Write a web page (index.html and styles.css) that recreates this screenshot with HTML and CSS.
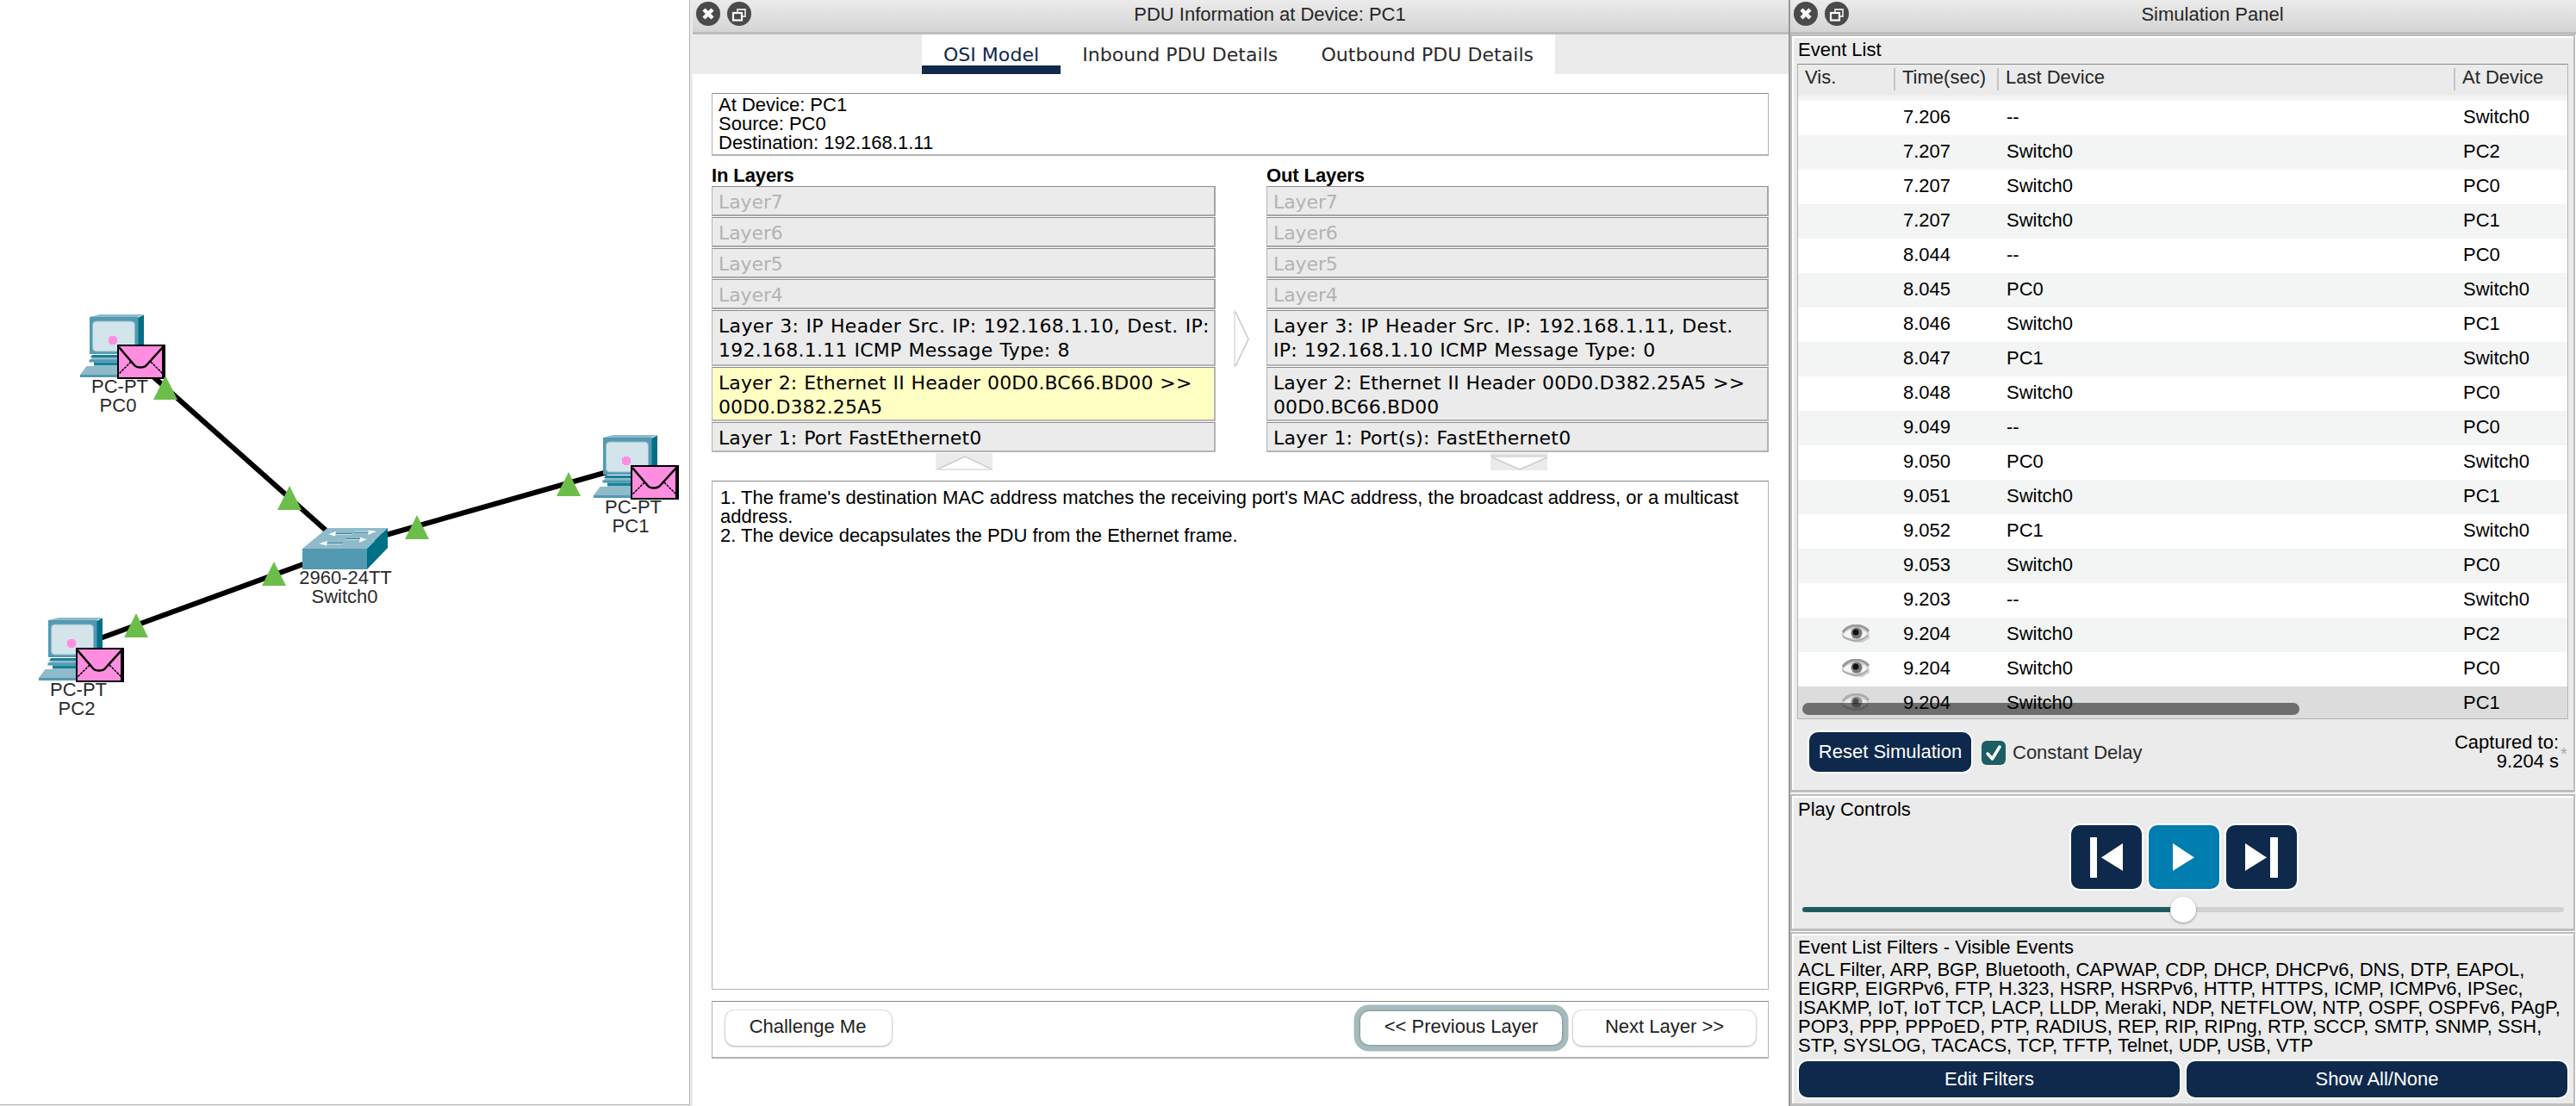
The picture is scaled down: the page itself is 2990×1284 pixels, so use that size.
FILE: index.html
```html
<!DOCTYPE html>
<html lang="en">
<head>
<meta charset="utf-8">
<title>Packet Tracer - Simulation</title>
<link rel="stylesheet" href="styles.css">
</head>
<body>
<svg class="defs" width="0" height="0" aria-hidden="true">
  <defs>
    <g id="pc">
      <path d="M104 368 116 365H167L160 368Z" fill="#8fbaca"/>
      <path d="M160 369 167 365.500V403L160 411Z" fill="#006f88"/>
      <rect x="104" y="368" width="56.500" height="43" fill="#5399b1"/>
      <rect x="107.500" y="373" width="49" height="35" rx="4" fill="#d3e4eb" stroke="#8fbaca"/>
      <path d="M107 412H162V415H105Z" fill="#17809a"/>
      <path d="M107 415H164V418H104Z" fill="#8fbaca"/>
      <rect x="103.500" y="417.500" width="60" height="3" fill="#5399b1"/>
      <rect x="109" y="420.500" width="50" height="4" fill="#17809a"/>
      <path d="M100.500 425H168V435H93Z" fill="#8fbaca"/>
      <rect x="93" y="435" width="76" height="3" fill="#5399b1"/>
      <path d="M128 390h6v1.500h2v7h-2v1.500h-6v-1.500h-2v-7h2Z" fill="#ff8ee0"/>
      <rect x="137" y="401" width="54" height="38" fill="#ff8ee0" stroke="#000" stroke-width="2"/>
      <path d="M190 400V440" stroke="#000" stroke-width="4"/>
      <path d="M138 403 156 424Q158 426.500 163 426.500T170 424L189 403" fill="none" stroke="#000" stroke-width="2.600"/>
      <path d="M152 420 138 434M175 420 189 434" stroke="#000" stroke-width="1.500" stroke-dasharray="3 1"/>
    </g>
    <path id="link" d="M0 0 14 28H-14Z" fill="#6cbe4b"/>
    <g id="close">
      <circle cx="14" cy="14" r="14" fill="#4a4a4a"/>
      <path d="M9 9 19 19M19 9 9 19" stroke="#fff" stroke-width="4.500"/>
    </g>
    <g id="float">
      <circle cx="14" cy="14" r="14" fill="#4a4a4a"/>
      <path d="M12 12V9H21V17H18" fill="none" stroke="#ddd" stroke-width="1.800"/>
      <rect x="7" y="13" width="10" height="8.500" fill="none" stroke="#fff" stroke-width="2.200"/>
    </g>
    <g id="eye">
      <path d="M0 8Q4 1 15 0Q27 0 31 8L32 16Q28 18 24 21Q12 22 0 14Z" fill="#cfcfcf"/>
      <path d="M1 9Q6 2 15 1Q26 1 31 8" fill="none" stroke="#9a9a9a" stroke-width="3"/>
      <path d="M2 11Q6 6 12 6V16Q6 16 2 13ZM22 7Q27 7 29 10 28 15 22 16Z" fill="#f5f5f5"/>
      <circle cx="17" cy="10" r="6.500" fill="#777"/>
      <circle cx="16" cy="9" r="3.500" fill="#111"/>
      <path d="M1 14Q14 22 24 17L30 13" fill="none" stroke="#aaa" stroke-width="2"/>
    </g>
  </defs>
</svg>

<div class="app">
  <main class="workspace">
    <svg class="topology" width="800" height="1282" viewBox="0 0 800 1282">
      <path d="M150 412.500 400 635M100 747 400 637.500M420 629 740 538" stroke="#000" stroke-width="6" fill="none"/>
      <use href="#pc"/>
      <use href="#pc" x="-48" y="352"/>
      <use href="#pc" x="596" y="140"/>
      <path d="M351 637 380 613H450L426 637Z" fill="#8fbaca"/>
      <path d="M426 637 450 613V636L426 661Z" fill="#006f88"/>
      <rect x="351" y="637" width="75" height="24" fill="#5399b1"/>
      <path d="M382 619.500H408M372 630.500H398M411 618H434M401 625.500H424" stroke="#2b7f99" stroke-width="1"/>
      <path d="M383 620.500H408M373 631.500H398M411 617H434M401 626.500H424" stroke="#e4f0f4" stroke-width=".8"/>
      <path d="M381 620 390 617 389 622.500ZM370 631 380 628 379 633.500ZM437 617 428 615.500 427 621ZM426 626 418 624 417 630Z" fill="#fff"/>
      <use href="#link" x="192" y="436"/>
      <use href="#link" x="336" y="564"/>
      <use href="#link" x="318" y="652"/>
      <use href="#link" x="158" y="712"/>
      <use href="#link" x="484" y="598"/>
      <use href="#link" x="660" y="548"/>
      <g class="device-label">
        <text x="139" y="455.500">PC-PT</text><text x="137" y="477.500">PC0</text>
        <text x="91" y="807.500">PC-PT</text><text x="89" y="829.500">PC2</text>
        <text x="735" y="595.500">PC-PT</text><text x="732" y="617.500">PC1</text>
        <text x="401" y="677.500">2960-24TT</text><text x="400" y="699.500">Switch0</text>
      </g>
    </svg>
  </main>

  <section class="dock pdu">
    <header class="titlebar">
      <svg width="64" height="28"><use href="#close"/><use href="#float" x="36"/></svg>
      <h1>PDU Information at Device: PC1</h1>
    </header>
    <nav class="tabs">
      <div class="tab active">OSI Model</div>
      <div class="tab">Inbound PDU Details</div>
      <div class="tab">Outbound PDU Details</div>
    </nav>
    <div class="pdu-body">
      <div class="frame info">At Device: PC1<br>Source: PC0<br>Destination: 192.168.1.11</div>
      <div class="layers">
        <div class="stack in">
          <h2>In Layers</h2>
          <div class="layer off">Layer7</div>
          <div class="layer off">Layer6</div>
          <div class="layer off">Layer5</div>
          <div class="layer off">Layer4</div>
          <div class="layer tall"><span class="wider">Layer 3: IP Header Src. IP: 192.168.1.10, Dest. IP:</span><br><span class="wide">192.168.1.11 ICMP Message Type: 8</span></div>
          <div class="layer mid selected">Layer 2: Ethernet II Header 00D0.BC66.BD00 &gt;&gt;<br>00D0.D382.25A5</div>
          <div class="layer">Layer 1: Port FastEthernet0</div>
          <svg class="stack-arrow" width="66" height="20"><rect width="66" height="20" fill="#ebebeb"/><path d="M2 19 34 4 66 19Z" fill="#fff"/><path d="M2 19 34 4 66 19" fill="none" stroke="#ccc" stroke-width="1.500"/><path d="M2 19H66" stroke="#ddd" stroke-width="1.500"/></svg>
        </div>
        <svg class="flow-arrow" width="18" height="66"><path d="M0 0H2V66H0Z" fill="#e2e2e2"/><path d="M2 2 17 34 2 65" fill="none" stroke="#ccc" stroke-width="1.700"/></svg>
        <div class="stack out">
          <h2>Out Layers</h2>
          <div class="layer off">Layer7</div>
          <div class="layer off">Layer6</div>
          <div class="layer off">Layer5</div>
          <div class="layer off">Layer4</div>
          <div class="layer tall"><span class="wider">Layer 3: IP Header Src. IP: 192.168.1.11, Dest.</span><br><span class="wide">IP: 192.168.1.10 ICMP Message Type: 0</span></div>
          <div class="layer mid">Layer 2: Ethernet II Header 00D0.D382.25A5 &gt;&gt;<br>00D0.BC66.BD00</div>
          <div class="layer"><span class="wide">Layer 1: Port(s): FastEthernet0</span></div>
          <svg class="stack-arrow" width="66" height="20"><rect width="66" height="20" fill="#ebebeb"/><path d="M2 5 34 19 66 5Z" fill="#fff"/><path d="M2 5 34 19 66 5" fill="none" stroke="#ccc" stroke-width="1.500"/><path d="M0 3.500H66" stroke="#ddd" stroke-width="3"/></svg>
        </div>
      </div>
      <div class="frame explain">1. The frame's destination MAC address matches the receiving port's MAC address, the broadcast address, or a multicast<br>address.<br>2. The device decapsulates the PDU from the Ethernet frame.</div>
      <div class="frame actions">
        <button class="btn challenge">Challenge Me</button>
        <button class="btn prev">&lt;&lt; Previous Layer</button>
        <button class="btn next">Next Layer &gt;&gt;</button>
      </div>
    </div>
  </section>

  <aside class="dock sim">
    <header class="titlebar">
      <svg width="64" height="28"><use href="#close"/><use href="#float" x="36"/></svg>
      <h1>Simulation Panel</h1>
    </header>
    <div class="group events">
      <h3>Event List</h3>
      <div class="table">
        <div class="thead"><div>Vis.</div><div>Time(sec)</div><div>Last Device</div><div>At Device</div></div>
        <div class="row"><div></div><div>7.206</div><div>--</div><div>Switch0</div></div>
        <div class="row"><div></div><div>7.207</div><div>Switch0</div><div>PC2</div></div>
        <div class="row"><div></div><div>7.207</div><div>Switch0</div><div>PC0</div></div>
        <div class="row"><div></div><div>7.207</div><div>Switch0</div><div>PC1</div></div>
        <div class="row"><div></div><div>8.044</div><div>--</div><div>PC0</div></div>
        <div class="row"><div></div><div>8.045</div><div>PC0</div><div>Switch0</div></div>
        <div class="row"><div></div><div>8.046</div><div>Switch0</div><div>PC1</div></div>
        <div class="row"><div></div><div>8.047</div><div>PC1</div><div>Switch0</div></div>
        <div class="row"><div></div><div>8.048</div><div>Switch0</div><div>PC0</div></div>
        <div class="row"><div></div><div>9.049</div><div>--</div><div>PC0</div></div>
        <div class="row"><div></div><div>9.050</div><div>PC0</div><div>Switch0</div></div>
        <div class="row"><div></div><div>9.051</div><div>Switch0</div><div>PC1</div></div>
        <div class="row"><div></div><div>9.052</div><div>PC1</div><div>Switch0</div></div>
        <div class="row"><div></div><div>9.053</div><div>Switch0</div><div>PC0</div></div>
        <div class="row"><div></div><div>9.203</div><div>--</div><div>Switch0</div></div>
        <div class="row"><div><svg width="32" height="22"><use href="#eye"/></svg></div><div>9.204</div><div>Switch0</div><div>PC2</div></div>
        <div class="row"><div><svg width="32" height="22"><use href="#eye"/></svg></div><div>9.204</div><div>Switch0</div><div>PC0</div></div>
        <div class="row current"><div><svg width="32" height="22"><use href="#eye"/></svg></div><div>9.204</div><div>Switch0</div><div>PC1</div></div>
        <div class="scrollbar"></div>
      </div>
      <div class="event-bar">
        <button class="navy reset">Reset Simulation</button>
        <svg class="check" width="28" height="28"><rect width="28" height="28" rx="6" fill="#1d5d63"/><path d="M7 15 12.500 21 21 7" fill="none" stroke="#fff" stroke-width="3.500" stroke-linecap="round" stroke-linejoin="round"/></svg>
        <span class="delay">Constant Delay</span>
        <div class="captured">Captured to:<br>9.204 s</div>
        <span class="star">*</span>
      </div>
    </div>
    <div class="group play">
      <h3>Play Controls</h3>
      <div class="controls">
        <button class="navy square"><svg width="82" height="74"><path d="M22 14h8v47h-8ZM35 37.500 60 21V53Z" fill="#fff"/></svg></button>
        <button class="navy square go"><svg width="82" height="74"><path d="M28 21 53 37.500 28 53Z" fill="#fff"/></svg></button>
        <button class="navy square"><svg width="82" height="74"><path d="M22 21 47 37.500 22 53ZM51 14h9v47h-9Z" fill="#fff"/></svg></button>
      </div>
      <div class="slider"><div class="thumb"></div></div>
    </div>
    <div class="group filters">
      <h3>Event List Filters - Visible Events</h3>
      <p>ACL Filter, ARP, BGP, Bluetooth, CAPWAP, CDP, DHCP, DHCPv6, DNS, DTP, EAPOL,<br>EIGRP, EIGRPv6, FTP, H.323, HSRP, HSRPv6, HTTP, HTTPS, ICMP, ICMPv6, IPSec,<br>ISAKMP, IoT, IoT TCP, LACP, LLDP, Meraki, NDP, NETFLOW, NTP, OSPF, OSPFv6, PAgP,<br>POP3, PPP, PPPoED, PTP, RADIUS, REP, RIP, RIPng, RTP, SCCP, SMTP, SNMP, SSH,<br>STP, SYSLOG, TACACS, TCP, TFTP, Telnet, UDP, USB, VTP</p>
      <div class="filter-buttons"><button class="navy">Edit Filters</button><button class="navy">Show All/None</button></div>
    </div>
  </aside>
</div>
</body>
</html>
```
FILE: styles.css
```css
* { box-sizing: border-box; }

body {
  margin: 0;
  width: 2990px;
  height: 1284px;
  overflow: hidden;
  background: #ebebeb;
  font: 22px/22px "Liberation Sans", Arial, sans-serif;
  color: #000;
}

h1, h2, h3, p { margin: 0; font-size: inherit; font-weight: normal; }
button { font: inherit; padding: 0; border: 0; }
.defs { position: absolute; }

.app {
  display: grid;
  grid-template-columns: 804px 1274px 912px;
  height: 1284px;
}

/* workspace */
.workspace {
  width: 801px;
  height: 1283px;
  background: #fff;
  border-right: 1px solid #b4b4b4;
  border-bottom: 1px solid #b4b4b4;
}
.topology { display: block; }
.device-label { fill: #2a2a2a; text-anchor: middle; }

/* dock windows */
.dock { display: flex; flex-direction: column; min-width: 0; }
.titlebar {
  display: flex;
  align-items: flex-start;
  flex: none;
  height: 40px;
  padding: 2px 0 0 4px;
  background: linear-gradient(#ebebeb, #d4d4d4);
  border-bottom: 3px solid #bdbdbd;
  color: #262626;
}
.titlebar h1 { flex: 1; text-align: center; padding-top: 4px; }

.pdu { background: #fff; border-right: 2px solid #999; }
.tabs {
  display: flex;
  justify-content: center;
  height: 46px;
  padding-right: 5px;
  background: #ebebeb;
  font: 22px/24px "DejaVu Sans", Verdana, sans-serif;
  letter-spacing: .05px;
  color: #2a2a2a;
}
.tab { padding: 12px 25px 0; background: #fff; white-space: nowrap; height: 46px; }
.tab.active { color: #0e294b; border-bottom: 10px solid #0e294b; }

.pdu-body { padding: 22px 23px 0 22px; display: flex; flex-direction: column; }
.frame {
  border: 1px solid #b4b4b4;
  border-top-color: #8a8a8a;
  background: #fff;
  white-space: nowrap;
}
.info { height: 73px; padding: 2px 7px; border-bottom-width: 2px; }
.layers { display: flex; height: 377px; padding-top: 12px; }
.stack { display: flex; flex-direction: column; }
.in { width: 585px; }
.out { width: 583px; }
.stack h2 { font-weight: bold; height: 23px; letter-spacing: -.1px; }
.layer {
  height: 35px;
  margin-bottom: 1px;
  padding: 4px 7px 0;
  border: 1px solid #b4b4b4;
  border-top-color: #8a8a8a;
  border-width: 1px 2px 2px 1px;
  background: #ebebeb;
  font: 22px/28px "DejaVu Sans", Verdana, sans-serif;
  letter-spacing: .1px;
  word-spacing: .75px;
  white-space: nowrap;
}
.layer .wide { letter-spacing: .22px; }
.layer .wider { letter-spacing: .35px; }
.layer.tall { height: 65px; }
.layer.mid { height: 63px; }
.layer.off { color: #b3b3b3; border-right-color: #a6a6a6; border-bottom-color: #a6a6a6; letter-spacing: -.1px; }
.layer.selected { background: #ffffc4; }
.stack-arrow { align-self: flex-start; margin-left: 260px; }
.flow-arrow { margin: 167px 20px 0 21px; flex: none; }

.explain { height: 591px; padding: 8px 9px; letter-spacing: -.01px; }
.actions {
  display: flex;
  align-items: flex-start;
  height: 67px;
  margin-top: 13px;
  padding: 10px 14px 0 15px;
  border-bottom-width: 2px;
}
.btn {
  height: 41px;
  padding-bottom: 4px;
  border-radius: 10px;
  background: #fff;
  color: #222;
  box-shadow: 0 0 2px rgba(0,0,0,.3), 0 1px 3px rgba(0,0,0,.25);
}
.challenge { width: 193px; padding-right: 2px; }
.prev {
  width: 234px;
  margin: 1px 13px 0 auto;
  height: 39px;
  box-shadow: 0 0 3px rgba(0,0,0,.4), 0 0 0 7.500px #a5bbbd;
}
.next { width: 212px; }

/* simulation panel */
.sim { background: #ebebeb; }
.group {
  margin-right: 1px;
  border: 2px solid #bebebe;
  border-bottom-width: 3px;
  box-shadow: inset 2px 2px 0 #fff, 1px 1px 0 #fff;
  padding: 2px 7px 0;
}
.events { height: 880px; }
.group h3 { height: 30px; padding: 3px 0; }
.table {
  position: relative;
  height: 761px;
  width: 895px;
  margin-left: -1px;
  border: 1px solid #b4b4b4;
  border-top-color: #8a8a8a;
  overflow: hidden;
}
.thead, .row { display: grid; grid-template-columns: 113px 120px 530px 1fr; }
.thead {
  height: 42px;
  padding-top: 4px;
  border-bottom: 6px solid #f3f5f4;
  color: #262626;
}
.thead div { height: 26px; padding: 0 0 0 8px; border-right: 2px solid #c4c4c4; }
.thead div:last-child { border: 0; }
.row { height: 40px; align-items: center; background: #fff; }
.row:nth-child(odd) { background: #f3f5f4; }
.row div { padding-left: 9px; height: 24px; }
.row div:first-child { padding-left: 51px; }
.row svg { display: block; }
.row.current { background: #dcdcdc; }
.current svg { opacity: .7; }
.scrollbar {
  position: absolute;
  left: 5px;
  bottom: 4px;
  width: 577px;
  height: 14px;
  border-radius: 7px;
  background: rgba(0,0,0,.5);
}
.event-bar { display: flex; padding: 15px 0 0 13px; }
.navy {
  background: #0e294b;
  color: #fff;
  border-radius: 10px;
  box-shadow: 0 0 0 2px #fff;
}
.reset { width: 188px; height: 46px; padding-bottom: 1px; }
.check { margin: 10px 8px 0 12px; }
.delay { margin-top: 13px; color: #2a2a2a; }
.captured { margin: 1px 2px 0 auto; text-align: right; }
.star { color: #aaa; width: 9px; margin: 14px -1px 0 0; font-size: 20px; }

.play { height: 159px; margin-top: 2px; }
.controls { display: flex; justify-content: center; gap: 8px; padding: 2px 0 0 3px; }
.square { width: 82px; height: 74px; }
.square svg { display: block; }
.go { background: #007daf; }
.slider {
  height: 6px;
  margin: 21px 4px 0 5px;
  border-radius: 3px;
  background: linear-gradient(90deg, #1f5b62 50%, #d2d2d2 50%);
}
.thumb {
  position: relative;
  top: -12px;
  width: 30px;
  height: 30px;
  margin: 0 auto;
  border-radius: 50%;
  background: #fff;
  box-shadow: 0 1px 3px rgba(0,0,0,.4);
}
.filters { height: 202px; margin-top: 1px; }
.filters h3 { height: 29px; }
.filters p { white-space: nowrap; }
.filter-buttons { display: grid; grid-template-columns: 1fr 1fr; gap: 8px; padding: 7px 0 0 1px; }
.filter-buttons .navy { height: 42px; padding-bottom: 1px; }
```
